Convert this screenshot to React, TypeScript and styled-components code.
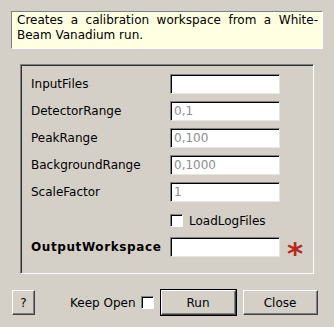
import React from 'react';
import styled, { createGlobalStyle } from 'styled-components';

const GlobalStyle = createGlobalStyle`
    html, body {
        margin: 0;
        padding: 0;
        background: #d4d0c8;
    }
    body {
        font-family: 'DejaVu Sans', 'Liberation Sans', sans-serif;
        font-size: 12px;
        color: #000;
    }
`;

interface Property {
    name: string;
    value?: string;
    isDefault?: boolean;
}

const properties: Property[] = [
    { name: 'InputFiles' },
    { name: 'DetectorRange', value: '0,1', isDefault: true },
    { name: 'PeakRange', value: '0,100', isDefault: true },
    { name: 'BackgroundRange', value: '0,1000', isDefault: true },
    { name: 'ScaleFactor', value: '1', isDefault: true },
];

export default function App() {
    return (
        <Dialog>
            <GlobalStyle />
            <Description>Creates a calibration workspace from a White-Beam Vanadium run.</Description>
            <PropertyFrame>
                {properties.map((p) => (
                    <React.Fragment key={p.name}>
                        <Label>{p.name}</Label>
                        <Field muted={p.isDefault}>{p.value}</Field>
                        <span />
                    </React.Fragment>
                ))}
                <span />
                <CheckRow>
                    <CheckBox />
                    LoadLogFiles
                </CheckRow>
                <span />
                <Label bold>OutputWorkspace</Label>
                <Field />
                <Star>*</Star>
            </PropertyFrame>
            <ButtonBar>
                <Button width={23}>?</Button>
                <KeepOpen>
                    Keep Open <CheckBox />
                </KeepOpen>
                <DefaultButton>
                    <Button width={75}>Run</Button>
                </DefaultButton>
                <Button width={75}>Close</Button>
            </ButtonBar>
        </Dialog>
    );
}

const Dialog = styled.div`
    width: 334px;
    height: 327px;
    box-sizing: border-box;
    padding: 11px 11px 0 11px;
    background: #d4d0c8;
`;
const Description = styled.div`
    box-sizing: border-box;
    height: 38px;
    padding: 1px 4px 0 5px;
    background: #ffffe1;
    border-top: 1px solid #808080;
    border-left: 1px solid #808080;
    border-right: 1px solid #ffffff;
    border-bottom: 1px solid #ffffff;
    line-height: 15px;
    text-align: justify;
`;
const PropertyFrame = styled.div`
    box-sizing: border-box;
    margin: 15px 9px 0 9px;
    width: 294px;
    height: 210px;
    padding: 9px 0 0 10px;
    border-top: 1px solid #808080;
    border-left: 1px solid #808080;
    border-right: 1px solid #ffffff;
    border-bottom: 1px solid #ffffff;
    box-shadow: inset 1px 1px 0 #303030;
    display: grid;
    grid-template-columns: 139px 110px 24px;
    grid-template-rows: repeat(5, 20px) 21px 20px;
    row-gap: 7px;
    align-items: center;
`;
const Label = styled.div<{ bold?: boolean }>`
    font-weight: ${(p) => (p.bold ? 'bold' : 'normal')};
    letter-spacing: ${(p) => (p.bold ? '0.6px' : 'normal')};
    white-space: nowrap;
`;
const Field = styled.div<{ muted?: boolean }>`
    box-sizing: border-box;
    height: 20px;
    padding: 2px 0 0 3px;
    background: #ffffff;
    border-top: 1px solid #808080;
    border-left: 1px solid #808080;
    border-right: 1px solid #e8e6e0;
    border-bottom: 1px solid #e8e6e0;
    box-shadow: inset 1px 1px 0 #000000;
    color: ${(p) => (p.muted ? '#8e8e8e' : '#000')};
    line-height: 15px;
`;
const CheckRow = styled.div`
    display: flex;
    align-items: center;
    gap: 6px;
    padding-top: 2px;
    white-space: nowrap;
`;
const CheckBox = styled.span`
    display: inline-block;
    box-sizing: border-box;
    width: 13px;
    height: 13px;
    background: #ffffff;
    border-top: 1px solid #808080;
    border-left: 1px solid #808080;
    border-right: 1px solid #ffffff;
    border-bottom: 1px solid #ffffff;
    box-shadow: inset 1px 1px 0 #000000;
`;
const Star = styled.div`
    padding: 12px 0 0 7px;
    color: #b8281c;
    font-weight: bold;
    font-size: 31px;
    line-height: 20px;
    height: 20px;
    overflow: visible;
`;
const ButtonBar = styled.div`
    margin-top: 15px;
    display: flex;
    align-items: center;
    height: 27px;
    margin-left: 1px;
`;
const Button = styled.div<{ width: number }>`
    box-sizing: border-box;
    width: ${(p) => p.width}px;
    height: 25px;
    display: flex;
    align-items: center;
    justify-content: center;
    background: #d4d0c8;
    border-top: 1px solid #ffffff;
    border-left: 1px solid #ffffff;
    border-right: 1px solid #404040;
    border-bottom: 1px solid #404040;
    box-shadow: inset -1px -1px 0 #808080;
`;
const DefaultButton = styled.div`
    margin: 0 6px 0 6px;
    border: 1px solid #000000;
`;
const KeepOpen = styled.div`
    margin-left: 35px;
    display: flex;
    align-items: center;
    gap: 5px;
    white-space: nowrap;
`;
